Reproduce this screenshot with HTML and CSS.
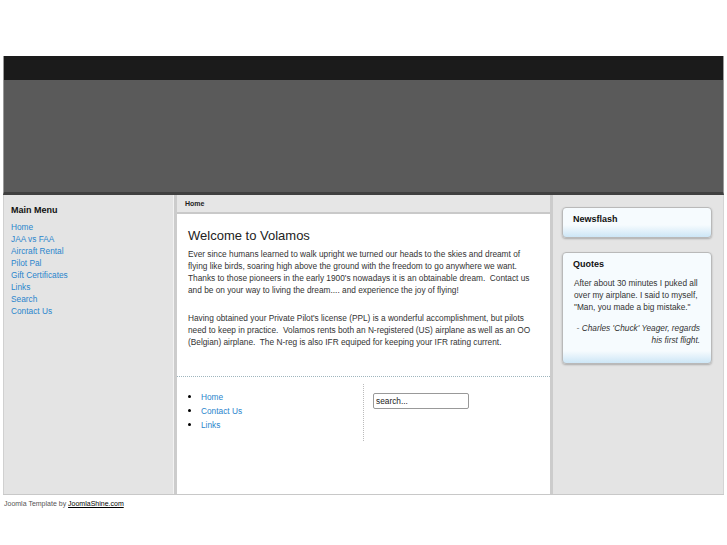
FILE: index.html
```html
<!DOCTYPE html>
<html>
<head>
<meta charset="utf-8">
<title>Volamos</title>
<link rel="stylesheet" href="styles.css">
</head>
<body>
<div class="wrap">
  <div class="topbar"></div>
  <div class="header"></div>
  <div class="cols">
    <div class="left">
      <h3 class="mod-title">Main Menu</h3>
      <ul class="menu">
        <li><a href="#">Home</a></li>
        <li><a href="#">JAA vs FAA</a></li>
        <li><a href="#">Aircraft Rental</a></li>
        <li><a href="#">Pilot Pal</a></li>
        <li><a href="#">Gift Certificates</a></li>
        <li><a href="#">Links</a></li>
        <li><a href="#">Search</a></li>
        <li><a href="#">Contact Us</a></li>
      </ul>
    </div>
    <div class="center">
      <div class="crumbs">Home</div>
      <div class="article">
        <h1 class="title">Welcome to Volamos</h1>
        <p>Ever since humans learned to walk upright we turned our heads to the skies and dreamt of flying like birds, soaring high above the ground with the freedom to go anywhere we want. Thanks to those pioneers in the early 1900's nowadays it is an obtainable dream.&nbsp; Contact us and be on your way to living the dream.... and experience the joy of flying!</p>
        <p>Having obtained your Private Pilot's license (PPL) is a wonderful accomplishment, but pilots need to keep in practice.&nbsp; Volamos rents both an N-registered (US) airplane as well as an OO (Belgian) airplane.&nbsp; The N-reg is also IFR equiped for keeping your IFR rating current.</p>
      </div>
      <div class="bottom">
        <div class="bleft">
          <ul class="blist">
            <li><a href="#">Home</a></li>
            <li><a href="#">Contact Us</a></li>
            <li><a href="#">Links</a></li>
          </ul>
        </div>
        <div class="bright">
          <input class="search" type="text" value="search...">
        </div>
      </div>
    </div>
    <div class="right">
      <div class="box news">
        <h3 class="mod-title">Newsflash</h3>
      </div>
      <div class="box">
        <h3 class="mod-title">Quotes</h3>
        <p class="quote">After about 30 minutes I puked all over my airplane. I said to myself, "Man, you made a big mistake."</p>
        <p class="author">- Charles 'Chuck' Yeager, regards his first flight.</p>
      </div>
    </div>
  </div>
  <div class="footer">Joomla Template by <a href="#">JoomlaShine.com</a></div>
</div>
</body>
</html>
```

FILE: styles.css
```css
html, body {
  margin: 0;
  padding: 0;
  background: #fff;
}
body {
  font-family: "Liberation Sans", Arial, sans-serif;
  font-size: 8.3px;
  color: #333;
}
a {
  color: #2a84cc;
  text-decoration: none;
}
.wrap {
  width: 721px;
  margin: 56px auto 0;
}
.topbar {
  height: 24px;
  background: #1b1b1b;
  border-left: 1px solid #9a9a9a;
  border-right: 1px solid #9a9a9a;
}
.header {
  height: 112px;
  background: #5a5a5a;
  border-bottom: 3px solid #404040;
  border-left: 1px solid #9a9a9a;
  border-right: 1px solid #9a9a9a;
}
.cols {
  display: flex;
  height: 299px;
  border-bottom: 1px solid #c8c8c8;
}
.left {
  width: 171px;
  box-sizing: border-box;
  background: #e4e4e4;
  padding: 9px 0 0 7px;
  border-left: 1px solid #d0d0d0;
  border-right: 1px solid #f2f2f2;
}
.mod-title {
  margin: 0;
  font-size: 9px;
  font-weight: bold;
  color: #111;
  line-height: 12px;
}
.menu {
  list-style: none;
  margin: 5px 0 0;
  padding: 0;
}
.menu li {
  line-height: 12px;
}
.center {
  width: 373px;
  flex: none;
  background: #fff;
  border-left: 3px solid #cccccc;
  border-right: 3px solid #cccccc;
  display: flex;
  flex-direction: column;
}
.crumbs {
  height: 17px;
  background: #e6e6e6;
  border-bottom: 2px solid #c9c9c9;
  font-size: 7px;
  font-weight: bold;
  color: #222;
  line-height: 18px;
  padding-left: 8px;
}
.article {
  padding: 13px 11px 0;
  height: 149px;
  border-bottom: 1px dotted #9fb5bd;
}
.title {
  margin: 0 0 3px;
  font-size: 13px;
  font-weight: normal;
  line-height: 18px;
  color: #222;
}
.article p {
  margin: 0 0 16px;
  line-height: 12px;
}
.bottom {
  display: flex;
  padding-top: 7px;
}
.bleft {
  flex: none;
  width: 186px;
  height: 57px;
  border-right: 1px dotted #bbb;
}
.blist {
  margin: 6px 0 0;
  padding: 0 0 0 24px;
  list-style: disc;
  color: #000;
}
.blist li {
  line-height: 14px;
}
.blist li::marker {
  font-size: 10px;
}
.bright {
  flex: 1;
  padding: 9px 0 0 9px;
}
.search {
  width: 96px;
  height: 16px;
  box-sizing: border-box;
  border: 1px solid #999;
  border-radius: 2px;
  padding: 0 2px;
  font-family: "Liberation Sans", Arial, sans-serif;
  font-size: 8.3px;
  color: #222;
  margin: 0;
  display: block;
}
.right {
  flex: 1;
  background: #e4e4e4;
  padding: 12px 0 0 9px;
  border-right: 1px solid #d4d4d4;
}
.box {
  width: 150px;
  box-sizing: border-box;
  border: 1px solid #b9b9b9;
  border-radius: 4px;
  box-shadow: 0 1px 2px rgba(0,0,0,0.25);
  background: linear-gradient(to bottom, #f6fbfe 0, #f6fbfe calc(100% - 12px), #cde6f6 100%);
  padding: 5px 10px 0;
  margin-bottom: 14px;
}
.news {
  height: 31px;
}
.quote {
  margin: 7px 0 0 1px;
  line-height: 12px;
}
.author {
  margin: 9px 1px 0;
  line-height: 12px;
  font-style: italic;
  text-align: right;
  padding-bottom: 17px;
}
.footer {
  padding: 4px 0 0 1px;
  font-size: 7px;
  color: #555;
  line-height: 10px;
}
.footer a {
  color: #000;
  text-decoration: underline;
}
```
